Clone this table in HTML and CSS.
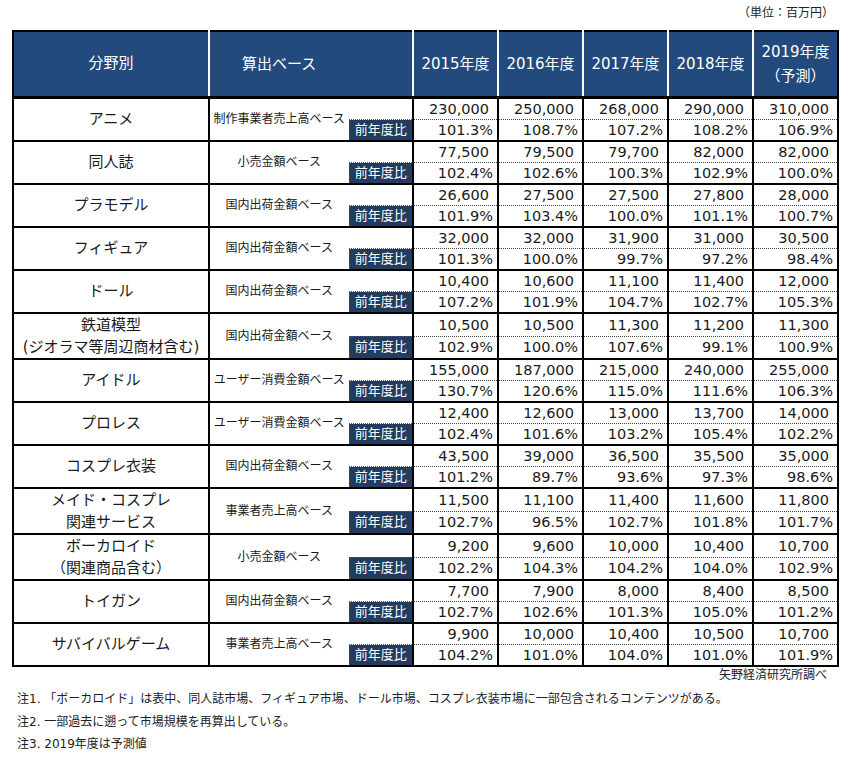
FILE: index.html
```html
<!DOCTYPE html>
<html lang="ja">
<head>
<meta charset="utf-8">
<title>市場規模</title>
<link rel="stylesheet" href="styles.css">
</head>
<body>
<div class="page">
  <div class="unit">（単位：百万円）</div>
  <table class="market">
    <colgroup>
      <col class="c-cat"><col class="c-base"><col class="c-lbl">
      <col class="c-y"><col class="c-y"><col class="c-y"><col class="c-y"><col class="c-y">
    </colgroup>
    <thead>
      <tr class="head">
        <th>分野別</th>
        <th colspan="2" class="h-base">算出ベース</th>
        <th>2015年度</th>
        <th>2016年度</th>
        <th>2017年度</th>
        <th>2018年度</th>
        <th>2019年度<br>（予測）</th>
      </tr>
    </thead>
    <tbody>
      <tr class="r1"><td class="cat" rowspan="2">アニメ</td><td class="base" rowspan="2">制作事業者売上高ベース</td><td class="gap"></td><td class="num">230,000</td><td class="num">250,000</td><td class="num">268,000</td><td class="num">290,000</td><td class="num">310,000</td></tr>
      <tr class="r2"><td class="yoy">前年度比</td><td class="pct">101.3%</td><td class="pct">108.7%</td><td class="pct">107.2%</td><td class="pct">108.2%</td><td class="pct">106.9%</td></tr>

      <tr class="r1"><td class="cat" rowspan="2">同人誌</td><td class="base" rowspan="2">小売金額ベース</td><td class="gap"></td><td class="num">77,500</td><td class="num">79,500</td><td class="num">79,700</td><td class="num">82,000</td><td class="num">82,000</td></tr>
      <tr class="r2"><td class="yoy">前年度比</td><td class="pct">102.4%</td><td class="pct">102.6%</td><td class="pct">100.3%</td><td class="pct">102.9%</td><td class="pct">100.0%</td></tr>

      <tr class="r1"><td class="cat" rowspan="2">プラモデル</td><td class="base" rowspan="2">国内出荷金額ベース</td><td class="gap"></td><td class="num">26,600</td><td class="num">27,500</td><td class="num">27,500</td><td class="num">27,800</td><td class="num">28,000</td></tr>
      <tr class="r2"><td class="yoy">前年度比</td><td class="pct">101.9%</td><td class="pct">103.4%</td><td class="pct">100.0%</td><td class="pct">101.1%</td><td class="pct">100.7%</td></tr>

      <tr class="r1"><td class="cat" rowspan="2">フィギュア</td><td class="base" rowspan="2">国内出荷金額ベース</td><td class="gap"></td><td class="num">32,000</td><td class="num">32,000</td><td class="num">31,900</td><td class="num">31,000</td><td class="num">30,500</td></tr>
      <tr class="r2"><td class="yoy">前年度比</td><td class="pct">101.3%</td><td class="pct">100.0%</td><td class="pct">99.7%</td><td class="pct">97.2%</td><td class="pct">98.4%</td></tr>

      <tr class="r1"><td class="cat" rowspan="2">ドール</td><td class="base" rowspan="2">国内出荷金額ベース</td><td class="gap"></td><td class="num">10,400</td><td class="num">10,600</td><td class="num">11,100</td><td class="num">11,400</td><td class="num">12,000</td></tr>
      <tr class="r2"><td class="yoy">前年度比</td><td class="pct">107.2%</td><td class="pct">101.9%</td><td class="pct">104.7%</td><td class="pct">102.7%</td><td class="pct">105.3%</td></tr>

      <tr class="r1"><td class="cat two" rowspan="2">鉄道模型<br>(ジオラマ等周辺商材含む)</td><td class="base" rowspan="2">国内出荷金額ベース</td><td class="gap"></td><td class="num">10,500</td><td class="num">10,500</td><td class="num">11,300</td><td class="num">11,200</td><td class="num">11,300</td></tr>
      <tr class="r2"><td class="yoy">前年度比</td><td class="pct">102.9%</td><td class="pct">100.0%</td><td class="pct">107.6%</td><td class="pct">99.1%</td><td class="pct">100.9%</td></tr>

      <tr class="r1"><td class="cat" rowspan="2">アイドル</td><td class="base" rowspan="2">ユーザー消費金額ベース</td><td class="gap"></td><td class="num">155,000</td><td class="num">187,000</td><td class="num">215,000</td><td class="num">240,000</td><td class="num">255,000</td></tr>
      <tr class="r2"><td class="yoy">前年度比</td><td class="pct">130.7%</td><td class="pct">120.6%</td><td class="pct">115.0%</td><td class="pct">111.6%</td><td class="pct">106.3%</td></tr>

      <tr class="r1"><td class="cat" rowspan="2">プロレス</td><td class="base" rowspan="2">ユーザー消費金額ベース</td><td class="gap"></td><td class="num">12,400</td><td class="num">12,600</td><td class="num">13,000</td><td class="num">13,700</td><td class="num">14,000</td></tr>
      <tr class="r2"><td class="yoy">前年度比</td><td class="pct">102.4%</td><td class="pct">101.6%</td><td class="pct">103.2%</td><td class="pct">105.4%</td><td class="pct">102.2%</td></tr>

      <tr class="r1"><td class="cat" rowspan="2">コスプレ衣装</td><td class="base" rowspan="2">国内出荷金額ベース</td><td class="gap"></td><td class="num">43,500</td><td class="num">39,000</td><td class="num">36,500</td><td class="num">35,500</td><td class="num">35,000</td></tr>
      <tr class="r2"><td class="yoy">前年度比</td><td class="pct">101.2%</td><td class="pct">89.7%</td><td class="pct">93.6%</td><td class="pct">97.3%</td><td class="pct">98.6%</td></tr>

      <tr class="r1"><td class="cat two" rowspan="2">メイド・コスプレ<br>関連サービス</td><td class="base" rowspan="2">事業者売上高ベース</td><td class="gap"></td><td class="num">11,500</td><td class="num">11,100</td><td class="num">11,400</td><td class="num">11,600</td><td class="num">11,800</td></tr>
      <tr class="r2"><td class="yoy">前年度比</td><td class="pct">102.7%</td><td class="pct">96.5%</td><td class="pct">102.7%</td><td class="pct">101.8%</td><td class="pct">101.7%</td></tr>

      <tr class="r1"><td class="cat two" rowspan="2">ボーカロイド<br>（関連商品含む）</td><td class="base" rowspan="2">小売金額ベース</td><td class="gap"></td><td class="num">9,200</td><td class="num">9,600</td><td class="num">10,000</td><td class="num">10,400</td><td class="num">10,700</td></tr>
      <tr class="r2"><td class="yoy">前年度比</td><td class="pct">102.2%</td><td class="pct">104.3%</td><td class="pct">104.2%</td><td class="pct">104.0%</td><td class="pct">102.9%</td></tr>

      <tr class="r1"><td class="cat" rowspan="2">トイガン</td><td class="base" rowspan="2">国内出荷金額ベース</td><td class="gap"></td><td class="num">7,700</td><td class="num">7,900</td><td class="num">8,000</td><td class="num">8,400</td><td class="num">8,500</td></tr>
      <tr class="r2"><td class="yoy">前年度比</td><td class="pct">102.7%</td><td class="pct">102.6%</td><td class="pct">101.3%</td><td class="pct">105.0%</td><td class="pct">101.2%</td></tr>

      <tr class="r1"><td class="cat" rowspan="2">サバイバルゲーム</td><td class="base" rowspan="2">事業者売上高ベース</td><td class="gap"></td><td class="num">9,900</td><td class="num">10,000</td><td class="num">10,400</td><td class="num">10,500</td><td class="num">10,700</td></tr>
      <tr class="r2"><td class="yoy">前年度比</td><td class="pct">104.2%</td><td class="pct">101.0%</td><td class="pct">104.0%</td><td class="pct">101.0%</td><td class="pct">101.9%</td></tr>
    </tbody>
  </table>
  <div class="source">矢野経済研究所調べ</div>
  <ul class="notes">
    <li>注1. 「ボーカロイド」は表中、同人誌市場、フィギュア市場、ドール市場、コスプレ衣装市場に一部包含されるコンテンツがある。</li>
    <li>注2. 一部過去に遡って市場規模を再算出している。</li>
    <li>注3. 2019年度は予測値</li>
  </ul>
</div>
</body>
</html>
```

FILE: styles.css
```css
html, body {
  margin: 0;
  padding: 0;
  background: #ffffff;
}

body {
  font-family: "DejaVu Sans", "Noto Sans CJK JP", sans-serif;
  color: #1a1a1a;
}

.page {
  width: 849px;
  padding-left: 12px;
}

.unit {
  width: 822px;
  text-align: right;
  font-size: 12px;
  line-height: 16px;
  padding-top: 5px;
  height: 25px;
  color: #222222;
}

.market {
  border-collapse: collapse;
  table-layout: fixed;
  width: 827px;
  border: 2px solid #000000;
}

.c-cat { width: 196px; }
.c-base { width: 140px; }
.c-lbl { width: 64px; }
.c-y { width: 85px; }

.market th {
  height: 62px;
  padding: 0;
  background: #234a7c;
  color: #ffffff;
  font-weight: normal;
  font-size: 15px;
  line-height: 24px;
  text-align: center;
  vertical-align: middle;
  border-top: 2px solid #000000;
  border-bottom: 3px solid #000000;
  border-left: 2px solid #ffffff;
  border-right: 2px solid #ffffff;
}

.market th:first-child {
  border-left: 2px solid #000000;
  padding-bottom: 2px;
}

.market th:last-child {
  border-right: 2px solid #000000;
}

.market th.h-base {
  padding-right: 64px;
}

.market td {
  padding: 0;
  vertical-align: middle;
}

.r1 td {
  height: 20px;
}

.r2 td {
  height: 20px;
}

.cat {
  font-size: 15px;
  line-height: 22px;
  text-align: center;
  border: 2px solid #000000;
  padding-bottom: 2px !important;
}

.cat.two {
  padding-bottom: 0 !important;
}

.base {
  font-size: 12px;
  line-height: 16px;
  text-align: center;
  white-space: nowrap;
  border-top: 2px solid #000000;
  border-bottom: 2px solid #000000;
  border-left: 2px solid #000000;
  padding-bottom: 1px !important;
}

.gap {
  border-top: 2px solid #000000;
  border-right: 2px solid #000000;
}

.yoy {
  background: #213c5f;
  color: #ffffff;
  font-size: 13px;
  line-height: 18px;
  text-align: center;
  border-top: 1px dotted #555555;
  border-left: 1px dotted #555555;
  border-right: 2px solid #000000;
  border-bottom: 2px solid #000000;
}

.num,
.pct {
  font-size: 14.5px;
  line-height: 18px;
  text-align: right;
  border-left: 2px solid #000000;
  border-right: 2px solid #000000;
}

.num {
  padding-right: 8px !important;
  border-top: 2px solid #000000;
  border-bottom: 1px dotted #444444;
}

.pct {
  padding-right: 4px !important;
  border-bottom: 2px solid #000000;
}

.source {
  width: 815px;
  text-align: right;
  font-size: 12px;
  line-height: 16px;
  color: #222222;
}

.notes {
  list-style: none;
  margin: 5px 0 0 0;
  padding: 0 0 0 5px;
  font-size: 12px;
  line-height: 22.5px;
  color: #222222;
}
```
